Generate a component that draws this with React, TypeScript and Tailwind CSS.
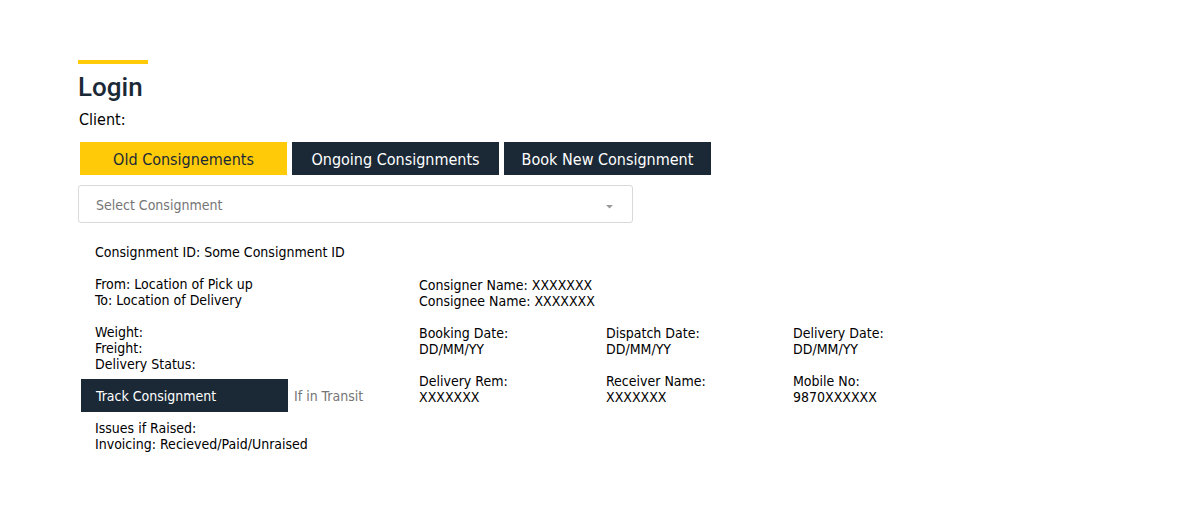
import { useState } from "react";

const tabs = ["Old Consignements", "Ongoing Consignments", "Book New Consignment"];

const details = [
  { label: "Booking Date:", value: "DD/MM/YY" },
  { label: "Dispatch Date:", value: "DD/MM/YY" },
  { label: "Delivery Date:", value: "DD/MM/YY" },
  { label: "Delivery Rem:", value: "XXXXXXX" },
  { label: "Receiver Name:", value: "XXXXXXX" },
  { label: "Mobile No:", value: "9870XXXXXX" },
];

export default function App() {
  const [active, setActive] = useState(0);

  return (
    <main className="min-h-screen bg-white px-4 pt-[60px] pb-8 font-['DejaVu_Sans_Condensed','DejaVu_Sans',sans-serif] text-[14px] leading-4 text-black md:pl-[78px]">
      <header>
        <div className="h-1 w-[70px] bg-[#ffcb08]" />
        <h1 className="mt-[7px] font-['Roboto',sans-serif] text-[26px] leading-8 font-medium text-[#1b2936]">Login</h1>
        <p className="mt-[5px] pl-px text-base leading-6">Client:</p>
      </header>

      <nav className="mt-[10px] ml-[2px] grid max-w-[631px] grid-cols-1 gap-[5px] sm:grid-cols-3">
        {tabs.map((tab, i) => (
          <button
            key={tab}
            type="button"
            onClick={() => setActive(i)}
            className={
              i === active
                ? "h-[33px] bg-[#ffcb08] pt-[2px] text-base whitespace-nowrap text-[#1b2936]"
                : "h-[33px] bg-[#1b2936] pt-[2px] text-base whitespace-nowrap text-white"
            }
          >
            {tab}
          </button>
        ))}
      </nav>

      <div className="relative mt-[10px] max-w-[555px]">
        <select
          aria-label="Select Consignment"
          className="h-[38px] w-full appearance-none rounded-[3px] border border-[#d9d9d9] bg-white px-[17px] pt-px text-[#757575]"
        >
          <option>Select Consignment</option>
        </select>
        <svg className="pointer-events-none absolute top-5 right-5 h-1 w-[7px]" viewBox="0 0 7 4" aria-hidden="true">
          <path d="M0 0h7L3.5 3.5z" fill="#999" />
        </svg>
      </div>

      <section className="mt-[21px] lg:grid lg:grid-cols-[341px_1fr]">
        <div>
          <div className="flex flex-col gap-4 pl-[17px]">
            <p>Consignment ID: Some Consignment ID</p>
            <div>
              <p>From: Location of Pick up</p>
              <p>To: Location of Delivery</p>
            </div>
            <div>
              <p>Weight:</p>
              <p>Freight:</p>
              <p>Delivery Status:</p>
            </div>
          </div>
          <div className="mt-[7px] ml-[3px] flex items-center gap-[6px]">
            <button type="button" className="h-[33px] w-[207px] bg-[#1b2936] px-[15px] text-left text-white">
              Track Consignment
            </button>
            <span className="text-[#757575]">If in Transit</span>
          </div>
          <div className="mt-2 pl-[17px]">
            <p>Issues if Raised:</p>
            <p>Invoicing: Recieved/Paid/Unraised</p>
          </div>
        </div>

        <div className="mt-4 pl-[17px] lg:mt-[33px] lg:pl-0">
          <p>Consigner Name: XXXXXXX</p>
          <p>Consignee Name: XXXXXXX</p>
          <dl className="mt-4 grid max-w-[561px] grid-cols-3 gap-y-4">
            {details.map(({ label, value }) => (
              <div key={label}>
                <dt>{label}</dt>
                <dd>{value}</dd>
              </div>
            ))}
          </dl>
        </div>
      </section>
    </main>
  );
}
